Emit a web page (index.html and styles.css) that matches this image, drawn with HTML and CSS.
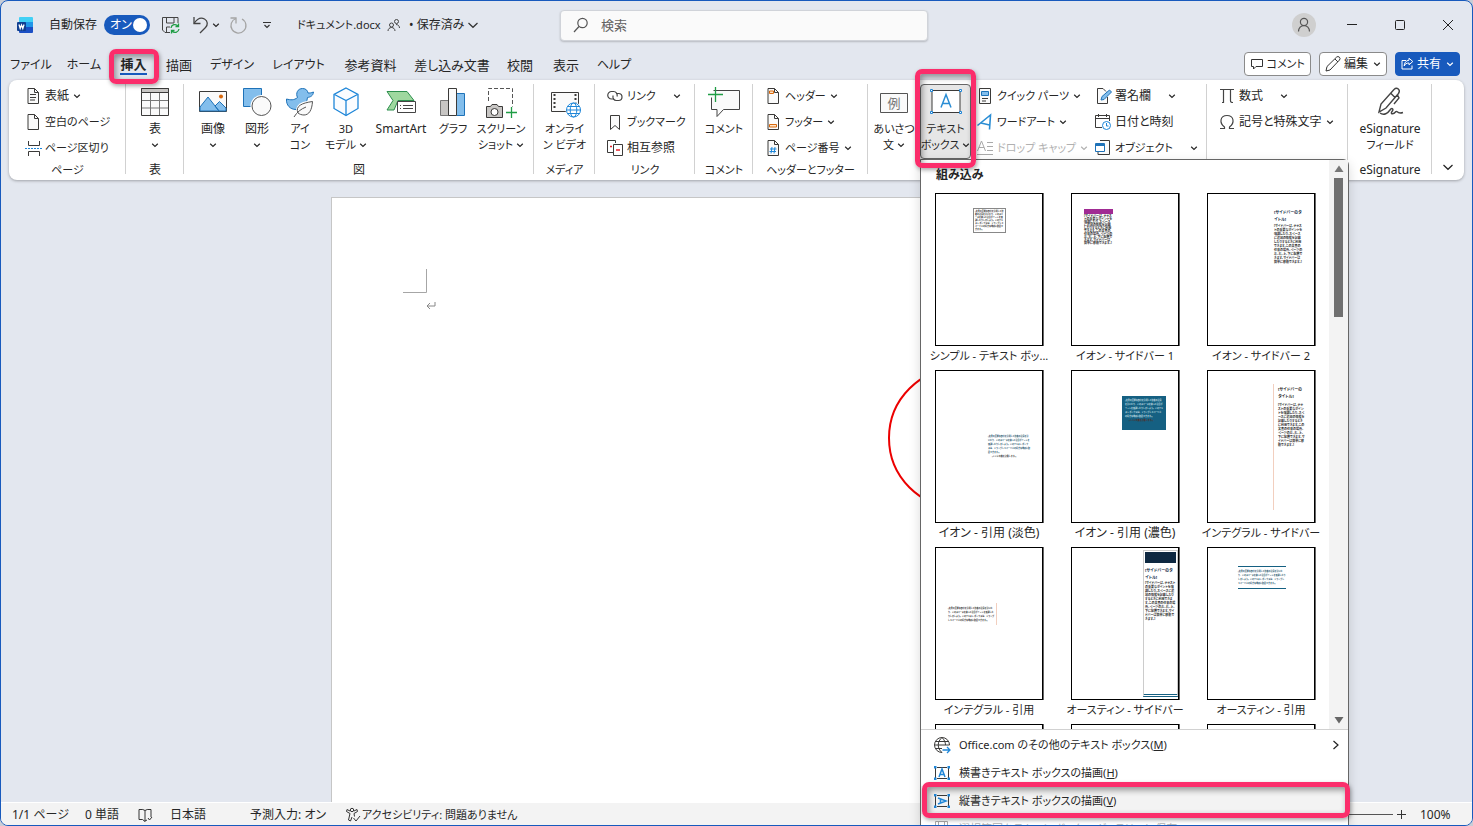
FILE: index.html
```html
<!DOCTYPE html>
<html lang="ja">
<head>
<meta charset="utf-8">
<meta name="viewport" content="width=device-width, initial-scale=1">
<title>ドキュメント.docx - Word</title>
<link rel="stylesheet" href="styles.css">
</head>
<body>
<svg class="sprite" aria-hidden="true">
  <symbol id="chev" viewBox="0 0 8 8"><path d="M1.2 2.8 4 5.4 6.8 2.8" fill="none" stroke="currentColor" stroke-width="1.2"/></symbol>
  <symbol id="page" viewBox="0 0 18 18"><path d="M4 1.5h6.5l4 4v11H4z" fill="#fafafa" stroke="#3b3a39"/><path d="M10.5 1.5v4h4" fill="none" stroke="#3b3a39"/></symbol>
</svg>
<div class="window">
  <header class="titlebar">
    <div class="title-left">
      <svg class="word-logo" viewBox="0 0 16 16"><path d="M3 0h12a1 1 0 0 1 1 1v4H2V1a1 1 0 0 1 1-1z" fill="#41d0f5"/><path d="M2 5h14v5H2z" fill="#2196e8"/><path d="M2 10h14v5a1 1 0 0 1-1 1H3a1 1 0 0 1-1-1z" fill="#1b4fc4"/><rect y="5" width="9" height="9" rx="1" fill="#103f91"/><path d="M2 7.500 3.200 11.500 4.500 8 5.800 11.500 7 7.500" fill="none" stroke="#fff" stroke-width="1.300"/></svg>
      <label class="autosave" for="autosave">自動保存</label>
      <span class="switch"><input id="autosave" type="checkbox" role="switch" checked><span class="switch-text">オン</span><span class="knob"></span></span>
      <button class="tool save" aria-label="上書き保存"><svg width="18" height="18" viewBox="0 0 18 18" fill="none" stroke="#444"><path d="M8 16.500H3L.5 14V1.500h15.500V7"/><path d="M4.500 1.500V7H12V1.500M4.500 16v-5H8"/><path d="M9 12a4 4 0 0 1 7-2M16.500 7.500V10.500H13.500M17 13a4 4 0 0 1-7 2M9.500 17.500v-3h3" stroke="#1f9d45" stroke-width="1.300"/></svg></button>
      <button class="tool undo" aria-label="元に戻す"><svg width="18" height="18" viewBox="0 0 18 18" fill="none" stroke="#444" stroke-width="1.300"><path d="M2 1v6.500h6.500"/><path d="M2 7.500C5 3 9 1 12.500 3s3.500 6 1 8.500L8 17"/></svg></button>
      <svg class="chev undo-chev"><use href="#chev"/></svg>
      <button class="tool redo" aria-label="やり直し"><svg width="18" height="18" viewBox="0 0 18 18" fill="none" stroke="#a5a5a5" stroke-width="1.300"><path d="M1.500 2h5.500v5.500"/><path d="M7 2.500a7.500 7.500 0 1 0 6 .5"/></svg></button>
      <button class="tool custom" aria-label="クイック アクセス ツール バー"><svg width="8" height="8" viewBox="0 0 8 8" fill="none" stroke="#333" stroke-width="1.200"><path d="M0 1.500h8M1.500 4 4 6.500 6.500 4"/></svg></button>
      <span class="doc-name kana">ドキュメント.docx</span>
      <svg class="people" width="14" height="14" viewBox="0 0 14 14" fill="none" stroke="#444"><circle cx="9.500" cy="3.500" r="2"/><path d="M9 6.500c2 0 3.500 1.500 3.500 3.500"/><circle cx="4.500" cy="7" r="2"/><path d="M1 13c0-2 1.500-3.500 3.500-3.500S8 11 8 13"/></svg>
      <button class="saved">• 保存済み<svg width="10" height="8" viewBox="0 0 10 8" fill="none" stroke="#333" stroke-width="1.200"><path d="M.5 2 5 6.300 9.500 2"/></svg></button>
    </div>
    <label class="search"><svg width="16" height="16" viewBox="0 0 16 16" fill="none" stroke="#555" stroke-width="1.200"><circle cx="9.500" cy="6" r="4.700"/><path d="M6 9.500 1 15"/></svg><input type="search" placeholder="検索" aria-label="検索"></label>
    <div class="window-controls">
      <button aria-label="アカウント"><svg width="24" height="24" viewBox="0 0 24 24" fill="none" stroke="#555" stroke-width="1.200"><circle cx="12" cy="12" r="12" fill="#cfcfcf" stroke="none"/><circle cx="12" cy="9" r="3.600"/><path d="M6.500 18.500c0-3.500 2.500-6 5.500-6s5.500 2.500 5.500 6"/></svg></button>
      <button aria-label="最小化"><svg width="12" height="12" viewBox="0 0 12 12" stroke="#222"><path d="M1 5.500h10"/></svg></button>
      <button aria-label="最大化"><svg width="12" height="12" viewBox="0 0 12 12" fill="none" stroke="#222"><rect x="1.500" y="1.500" width="9" height="9" rx="1"/></svg></button>
      <button aria-label="閉じる"><svg width="12" height="12" viewBox="0 0 12 12" stroke="#222"><path d="m1 1 10 10M11 1 1 11"/></svg></button>
    </div>
  </header>

  <div class="tab-row">
    <nav class="tabs">
      <a href="#file" class="tab-kana">ファイル</a><a href="#home" class="tab-kana">ホーム</a><a href="#insert" class="current" aria-current="page"><span>挿入</span><i class="callout callout-tab"></i></a><a href="#draw">描画</a><a href="#design" class="tab-kana">デザイン</a><a href="#layout" class="tab-kana">レイアウト</a><a href="#refs">参考資料</a><a href="#mail">差し込み文書</a><a href="#review">校閲</a><a href="#view">表示</a><a href="#help" class="tab-kana">ヘルプ</a>
    </nav>
    <div class="tab-actions">
      <button class="pill kana"><svg width="14" height="14" viewBox="0 0 14 14" fill="none" stroke="#333"><path d="M1.500 2.500h11v7H6L3.500 12V9.500h-2z"/></svg>コメント</button>
      <button class="pill"><svg width="16" height="16" viewBox="0 0 16 16" fill="none" stroke="#333"><path d="m1 15 1-4.500L11.500 1.200a1.900 1.900 0 0 1 2.900 2.900L5 14zM10 3l3 3"/></svg>編集<svg class="chev"><use href="#chev"/></svg></button>
      <button class="pill share"><svg width="13" height="13" viewBox="0 0 13 13" fill="none" stroke="#fff"><path d="M5 3.500H1v8.500h10V8.500M8 1.200l3.800 3.300L8 7.800V6C5.500 6 4 7 3.200 9c0-3 1.800-5.500 4.800-5.800z"/></svg>共有<svg class="chev"><use href="#chev"/></svg></button>
    </div>
  </div>

  <section class="ribbon" aria-label="挿入">
    <div class="group g-pages">
      <div class="group-body">
        <div class="stack">
          <button class="small"><svg><use href="#page"/><path d="M6 7.500h6M6 10.500h6M6 13h5" stroke="#3b3a39"/></svg>表紙<svg class="chev"><use href="#chev"/></svg></button>
          <button class="small kana"><svg><use href="#page"/></svg>空白のページ</button>
          <button class="small kana"><svg fill="none" stroke="#3b3a39"><path d="M4.500 2v4.500h11V2M4.500 17v-4.500h11V17"/><path d="M1 9.500h17" stroke="#1e86d8" stroke-dasharray="2 1"/></svg>ページ区切り</button>
        </div>
      </div>
      <div class="group-label kana">ページ</div>
    </div>
    <div class="group g-table">
      <div class="group-body">
        <button class="big"><svg viewBox="0 0 32 32" fill="none" stroke="#3b3a39"><path d="M2.500 2.500h27v27h-27z" fill="#fafafa"/><path d="M2.500 2.500h27v4h-27z" fill="#c8c6c4"/><path d="M11.500 7v22M20.500 7v22M3 14.500h26M3 22h26" stroke="#777"/></svg><span>表</span><svg class="chev"><use href="#chev"/></svg></button>
      </div>
      <div class="group-label">表</div>
    </div>
    <div class="group g-figures">
      <div class="group-body">
        <button class="big"><svg viewBox="0 0 32 32"><path d="M2.500 5.500h27v20h-27z" fill="#fafafa" stroke="#3b3a39"/><path d="M3 21 11 11 22 25H3zM18 20l4.500-4.500L29 22v3h-7z" fill="#83beec" stroke="#1e72b8"/><circle cx="24" cy="10.500" r="2" fill="#d8680c"/></svg><span>画像</span><svg class="chev"><use href="#chev"/></svg></button>
        <button class="big"><svg viewBox="0 0 32 32"><path d="M2.500 2.500h18v18h-18z" fill="#83beec" stroke="#1e72b8"/><circle cx="20.500" cy="20" r="11" fill="#fff"/><circle cx="20.500" cy="20" r="9.500" fill="#fafafa" stroke="#555"/></svg><span>図形</span><svg class="chev"><use href="#chev"/></svg></button>
        <button class="big narrow kana"><svg viewBox="0 0 32 32"><path d="M2.500 13c4 1 7.500 1.500 11-1.500-2-4 0-9 5-9 3.500 0 5 2 5.500 4.500 1.500 0 3 0 5.500-1-.5 4-3 5-6 5.500-1 8-6 12-11.500 12-6 0-10-4.500-9.500-10.500z" fill="#83beec" stroke="#1e72b8"/><path d="M12 25c0-7 6-10 17.500-11 0 8-2 16-8 16-3 0-6-1-9.500-5z" fill="#fff"/><path d="M14 27c-3-7 4-10 14.500-11.500C28 24 25 29 20 29c-2.500 0-4.500-.8-6-2z" fill="#fafafa" stroke="#555"/><path d="M10 31c3-5 7-8 12-10" fill="none" stroke="#555"/></svg><span>アイ</span><span>コン</span></button>
        <button class="big model kana"><svg viewBox="0 0 32 32" fill="#fafcff" stroke="#1e86d8" stroke-width="1.300"><path d="m16 2 12 6.500v14L16 29.500l-12-7v-14z"/><path d="m4.500 8.500 11.500 6 11.500-6M16 15v14" fill="none"/></svg><span>3D</span><span>モデル<svg class="chev"><use href="#chev"/></svg></span></button>
        <button class="big wide"><svg viewBox="0 0 32 32"><path d="M2 5.500h20l7 9H13L9 24H2l6-9.500z" fill="#9fd89f" stroke="#2d8f4e"/><path d="M12.500 15.500h18v11h-18z" fill="#fff" stroke="#444"/><path d="M15 19.500h1M18 19.500h10M15 22.500h1M18 22.500h10" stroke="#444"/></svg><span>SmartArt</span></button>
        <button class="big kana"><svg viewBox="0 0 32 32"><path d="M3.500 14.500h8v15h-8z" fill="#c8c6c4" stroke="#777"/><path d="M19.500 7.500h8v22h-8z" fill="#83beec" stroke="#1e72b8"/><path d="M11.500 2.500h8v27h-8z" fill="#fafafa" stroke="#3b3a39"/></svg><span>グラフ</span></button>
        <button class="big shot kana"><svg viewBox="0 0 32 32"><path d="M3.500 15V2.500h24v18" fill="none" stroke="#555" stroke-dasharray="4 2"/><path d="M1.500 20.500h4l1.500-2h5l1.500 2h4v11h-16z" fill="#c8c6c4" stroke="#3b3a39"/><circle cx="9.500" cy="26" r="3.500" fill="#fff" stroke="#3b3a39"/><path d="M26.500 21v11M21 26.500h11" stroke="#1f9d45" stroke-width="1.300"/></svg><span>スクリーン</span><span>ショット<svg class="chev"><use href="#chev"/></svg></span></button>
      </div>
      <div class="group-label">図</div>
    </div>
    <div class="group g-media">
      <div class="group-body">
        <button class="big kana"><svg viewBox="0 0 32 32"><path d="M2.500 6.500h27v19h-27z" fill="#fafafa" stroke="#3b3a39"/><path d="M5.500 8v16M26.500 8v16" stroke="#3b3a39" stroke-width="2" stroke-dasharray="2 2"/><circle cx="24.500" cy="24" r="8" fill="#fff"/><g fill="none" stroke="#1e86d8"><circle cx="24.500" cy="24" r="7"/><ellipse cx="24.500" cy="24" rx="3.300" ry="7"/><path d="M17.500 24h14M18.500 20.500h12M18.500 27.500h12"/></g></svg><span>オンライ</span><span>ン ビデオ</span></button>
      </div>
      <div class="group-label kana">メディア</div>
    </div>
    <div class="group g-links">
      <div class="group-body">
        <div class="stack">
          <button class="small kana"><svg fill="none" stroke="#444" stroke-width="1.200"><path d="M8 12H5.500a3.700 3.700 0 1 1 0-7.500h2a3.700 3.700 0 0 1 3.500 5"/><path d="M10 6.500h2.500a3.500 3.500 0 1 1 0 7h-2a3.500 3.500 0 0 1-3.300-5"/></svg>リンク<svg class="chev far"><use href="#chev"/></svg></button>
          <button class="small kana"><svg fill="#fafafa" stroke="#3b3a39"><path d="M4.500 2.500h9v14L9 12.500l-4.500 4z"/></svg>ブックマーク</button>
          <button class="small"><svg fill="#fff" stroke="#3b3a39"><path d="M7 13.500H1.500v-12h8V4"/><path d="M7.500 5.500h9v11h-9z"/><path d="M4 7.500h2M10 11h4" stroke="#e8202a" stroke-width="1.300"/></svg>相互参照</button>
        </div>
      </div>
      <div class="group-label kana">リンク</div>
    </div>
    <div class="group g-comment">
      <div class="group-body">
        <button class="big kana"><svg viewBox="0 0 32 32"><path d="M5.500 4.500h26v19h-16l-6.500 7v-7H3.500v-12" fill="#fafafa" stroke="#444"/><path d="M7.500 1v15M0 8.500h15" stroke="#1f9d45" stroke-width="1.300"/></svg><span>コメント</span></button>
      </div>
      <div class="group-label kana">コメント</div>
    </div>
    <div class="group g-header">
      <div class="group-body">
        <div class="stack">
          <button class="small kana"><svg><use href="#page"/><path d="M5.500 4h4v2.500h-4z" fill="#fde3c8" stroke="#d8680c"/></svg>ヘッダー<svg class="chev"><use href="#chev"/></svg></button>
          <button class="small kana"><svg><use href="#page"/><path d="M5.500 11.500h7V14h-7z" fill="#fde3c8" stroke="#d8680c"/></svg>フッター<svg class="chev"><use href="#chev"/></svg></button>
          <button class="small kana"><svg><use href="#page"/><path d="M8 8 7 14.500M11 8l-1 6.500M6 10h6.500M5.500 12.500H12" stroke="#1e86d8"/></svg>ページ番号<svg class="chev"><use href="#chev"/></svg></button>
        </div>
      </div>
      <div class="group-label kana">ヘッダーとフッター</div>
    </div>
    <div class="group g-text">
      <div class="group-body">
        <button class="big greet kana"><svg viewBox="0 0 32 32"><path d="M2.500 7.500h27v19h-27z" fill="#fafafa" stroke="#555"/><text x="16" y="22" text-anchor="middle" class="icon-kanji">例</text></svg><span>あいさつ</span><span>文<svg class="chev"><use href="#chev"/></svg></span></button>
        <div class="textbox">
          <button class="big open kana" aria-expanded="true"><svg viewBox="0 0 32 32"><path d="M2 4.500h28v22H2z" fill="#fff" stroke="#3b3a39"/><path d="m11 21.500 5-13 5 13M12.500 17.500h7" fill="none" stroke="#2a8dd4" stroke-width="1.500"/><path d="M.5 3.500h2v2h-2zM29.500 3.500h2v2h-2zM.5 25.500h2v2h-2zM29.500 25.500h2v2h-2z" fill="#fff" stroke="#1e86d8"/></svg><span>テキスト</span><span>ボックス<svg class="chev"><use href="#chev"/></svg></span></button>
          <i class="callout callout-button"></i>
          <div class="menu" role="menu">
            <div class="gallery">
              <div class="gallery-main">
                <h2>組み込み</h2>
                <div class="grid">
                  <button class="card"><span class="thumb"><span class="tiny fine boxed">[文書の重要な部分を引用して読者の注意を引いたり、このスペースを使って注目ポイントを強調したりしましょう。このテキスト ボックスは、ドラッグしてページ上の好きな場所に配置できます。]</span></span><span class="name kana">シンプル - テキスト ボッ...</span></button>
                  <button class="card"><span class="thumb"><span class="purple"></span><span class="tiny side-left">[サイドバーは、テキストの重要なポイントを強調したり、スペースに追加の情報を記載したりするときに利用できます。この文書の任意の場所、ページの左、右、上、下に配置できます。サイドバーは簡単に移動できます。]</span></span><span class="name kana">イオン - サイドバー 1</span></button>
                  <button class="card"><span class="thumb"><span class="tiny-title navy side-title">[サイドバーのタイトル]</span><span class="tiny loose side-right">[サイドバーは、テキストの重要なポイントを強調したり、スペースに追加の情報を記載したりするときに利用できます。この文書の任意の場所、ページの左、右、上、下に配置できます。サイドバーは簡単に移動できます。]</span></span><span class="name kana">イオン - サイドバー 2</span></button>
                  <button class="card"><span class="thumb"><span class="tiny fine quote-light">[文書の重要な部分を引用して読者の注意を引いたり、このスペースを使って注目ポイントを強調したりしましょう。このテキスト ボックスは、ドラッグしてページ上の好きな場所に配置できます。]<span class="source">[ここに出典を記載します。]</span></span></span><span class="name">イオン - 引用 (淡色)</span></button>
                  <button class="card"><span class="thumb"><span class="tiny fine quote-dark">[文書の重要な部分を引用して読者の注意を引いたり、このスペースを使って注目ポイントを強調したりしましょう。このテキスト ボックスは、ドラッグしてページ上の好きな場所に配置できます。]<span class="source">[ここに出典を記載します。]</span></span></span><span class="name">イオン - 引用 (濃色)</span></button>
                  <button class="card"><span class="thumb"><span class="integral"><span class="tiny-title">[サイドバーのタイトル]</span><span class="tiny loose">[サイドバーは、テキストの重要なポイントを強調したり、スペースに追加の情報を記載したりするときに利用できます。この文書の任意の場所、ページの左、右、上、下に配置できます。サイドバーは簡単に移動できます。]</span></span></span><span class="name kana">インテグラル - サイドバー</span></button>
                  <button class="card"><span class="thumb"><span class="tiny fine quote-integral">[文書の重要な部分を引用して読者の注意を引いたり、このスペースを使って注目ポイントを強調したりしましょう。このテキスト ボックスは、ドラッグしてページ上の好きな場所に配置できます。]</span></span><span class="name kana">インテグラル - 引用</span></button>
                  <button class="card"><span class="thumb"><span class="austin"><span class="austin-top"></span><span class="tiny-title navy">[サイドバーのタイトル]</span><span class="tiny loose">[サイドバーは、テキストの重要なポイントを強調したり、スペースに追加の情報を記載したりするときに利用できます。この文書の任意の場所、ページの左、右、上、下に配置できます。サイドバーは簡単に移動できます。]</span></span></span><span class="name kana">オースティン - サイドバー</span></button>
                  <button class="card"><span class="thumb"><span class="tiny fine quote-austin">[文書の重要な部分を引用して読者の注意を引いたり、このスペースを使って注目ポイントを強調したりしましょう。このテキスト ボックスは、ドラッグしてページ上の好きな場所に配置できます。]</span></span><span class="name kana">オースティン - 引用</span></button>
                  <button class="card" aria-label="次の項目"><span class="thumb"></span></button>
                  <button class="card" aria-label="次の項目"><span class="thumb"></span></button>
                  <button class="card" aria-label="次の項目"><span class="thumb"></span></button>
                </div>
              </div>
              <div class="scroll"><svg width="10" height="8" viewBox="0 0 10 8"><path d="M5 0.500 9.500 7H.5z" fill="#777"/></svg><span class="scroll-thumb"></span><svg width="10" height="8" viewBox="0 0 10 8"><path d="M5 7.500.5 1h9z" fill="#666"/></svg></div>
            </div>
            <div class="menu-items">
              <button class="item kana" role="menuitem"><svg width="18" height="18" viewBox="0 0 18 18" fill="none" stroke="#3b3a39"><path d="M16.500 9A7.500 7.500 0 1 0 9 16.500"/><path d="M9 16.500c-5-4-5-11 0-15 2.500 2.500 3.500 5 3.500 7.500M2.500 5.500h13M1.500 9h15M2.500 12.500H9"/><path d="M9.500 14h7M14 11l3 3-3 3" stroke="#1e86d8" stroke-width="1.300"/></svg><span>Office.com のその他のテキスト ボックス(<u>M</u>)</span><svg class="more" width="8" height="10" viewBox="0 0 8 10" fill="none" stroke="#222" stroke-width="1.200"><path d="m1.500 1 4.500 4-4.500 4"/></svg></button>
              <button class="item kana" role="menuitem"><svg width="18" height="18" viewBox="0 0 18 18" fill="none"><path d="M2.500 4v10M15.500 4v10M4 3.500h10M4 14.500h10" stroke="#3b3a39"/><path d="m6 13 3-8 3 8M7 10.500h4" stroke="#1e86d8" stroke-width="1.500"/><path d="M1 2h2.500v2.500H1zM14.500 2H17v2.500h-2.500zM1 13.500h2.500V16H1zM14.500 13.500H17V16h-2.500z" fill="#1e86d8"/></svg><span>横書きテキスト ボックスの描画(<u>H</u>)</span></button>
              <button class="item kana active" role="menuitem"><svg width="18" height="18" viewBox="0 0 18 18" fill="none"><path d="M2.500 4v10M15.500 4v10M4 3.500h10M4 14.500h10" stroke="#3b3a39"/><path d="m5 6 8 3-8 3M7.500 7v4" stroke="#1e86d8" stroke-width="1.500"/><path d="M1 2h2.500v2.500H1zM14.500 2H17v2.500h-2.500zM1 13.500h2.500V16H1zM14.500 13.500H17V16h-2.500z" fill="#1e86d8"/></svg><span>縦書きテキスト ボックスの描画(<u>V</u>)</span><i class="callout callout-item"></i></button>
              <button class="item kana" role="menuitem" disabled><svg width="18" height="18" viewBox="0 0 18 18" fill="none" stroke="#aaa"><path d="M2.500 1.500h12v15h-12zM5.500 1.500v7h6v-7"/></svg><span>選択範囲をテキスト ボックス ギャラリーに保存(<u>S</u>)</span></button>
            </div>
          </div>
        </div>
        <div class="stack quick">
          <button class="small kana"><svg><path d="M3.500 1.500h11v15h-11z" fill="#fafafa" stroke="#3b3a39"/><path d="M5.500 4.500h7v4h-7z" fill="#83beec" stroke="#1e72b8"/><path d="M6 11.500h6M6 14h4" stroke="#3b3a39"/></svg>クイック パーツ<svg class="chev"><use href="#chev"/></svg></button>
          <button class="small kana"><svg fill="none" stroke="#2a8dd4" stroke-width="1.600"><path d="M1.500 12.500 14.500 2l-1 14.500M5 10l8.500 2"/></svg>ワードアート<svg class="chev"><use href="#chev"/></svg></button>
          <button class="small kana" disabled><svg fill="none" stroke="#aaa"><path d="m1.500 12 4-10 4 10M3 8.500h5M11 3.500h6M11 7.500h6M11 11.500h6M1 15.500h16"/></svg>ドロップ キャップ<svg class="chev"><use href="#chev"/></svg></button>
        </div>
        <div class="stack">
          <button class="small"><svg fill="none"><path d="M13.500 10v6.500h-10v-15H9l3 3" fill="#fafafa" stroke="#3b3a39"/><path d="m7 13 1-3.500L15.500 3l2 2L10 12.500z" fill="#83beec" stroke="#1e72b8"/></svg>署名欄<svg class="chev far"><use href="#chev"/></svg></button>
          <button class="small"><svg fill="none" stroke="#3b3a39"><path d="M8 14.500H1.500v-12h14V8M1.500 5.500h14M4.500 1v3M12.500 1v3"/><circle cx="12.500" cy="12.500" r="4" stroke="#1e86d8" fill="#fff"/><path d="M12.500 10v3h2" stroke="#1e86d8"/></svg>日付と時刻</button>
          <button class="small kana"><svg fill="none"><path d="M6 1.500h9.500v14H4V13" fill="#fafafa" stroke="#3b3a39"/><path d="M1.500 4.500h9v8h-9z" fill="#fff" stroke="#1e72b8"/><path d="M2 6h8" stroke="#1e72b8" stroke-width="2"/></svg>オブジェクト<svg class="chev far"><use href="#chev"/></svg></button>
        </div>
      </div>
    </div>
    <div class="group g-symbols">
      <div class="group-body">
        <div class="stack">
          <button class="small"><svg fill="none" stroke="#444" stroke-width="1.200"><path d="M2 2.500h14M5.500 2.500v13H4M12.500 2.500v11.500q0 1.500 2.500 1.500"/></svg>数式<svg class="chev far"><use href="#chev"/></svg></button>
          <button class="small"><svg fill="none" stroke="#444" stroke-width="1.200"><path d="M2 15.500h4.500V14C1 10 2 2.500 9 2.500S17 10 11.500 14v1.500H16"/></svg>記号と特殊文字<svg class="chev"><use href="#chev"/></svg></button>
        </div>
      </div>
    </div>
    <div class="group g-sign">
      <div class="group-body">
        <button class="big wide"><svg viewBox="0 0 32 32" fill="none" stroke="#444" stroke-width="1.400"><path d="m5 26 2-8L20 3.500c3-3 7 .5 4.500 4L12 22zM17 7.500l4 4M23.500 9l1.500 3-5 6M6 27c4 3 8 0 10-3s4-1 2 1.500 1 3.500 4 0c1.500-1 1 3 7 1"/></svg><span>eSignature</span><span class="kana">フィールド</span></button>
      </div>
      <div class="group-label">eSignature</div>
    </div>
    <button class="collapse" aria-label="リボンを折りたたむ"><svg width="10" height="8" viewBox="0 0 10 8" fill="none" stroke="#222" stroke-width="1.200"><path d="M.5 2 5 6.300 9.500 2"/></svg></button>
  </section>

  <main class="workspace">
    <div class="paper">
      <svg class="corner" width="36" height="42" viewBox="0 0 36 42" fill="none" stroke="#a6a6a6"><path d="M0 23.500h23.500V0"/><path d="M32 33v4h-8M27 34l-3 3 3 3" stroke="#888"/></svg>
      <svg class="circle" width="142" height="142" viewBox="0 0 142 142"><circle cx="71" cy="71" r="70" fill="none" stroke="#ec0000" stroke-width="2"/></svg>
    </div>
  </main>

  <footer class="status">
    <span class="s-page">1/1 ページ</span>
    <span class="s-words">0 単語</span>
    <svg class="s-book" width="14" height="14" viewBox="0 0 14 14" fill="none" stroke="#333"><path d="M7 2.500Q5.500 1 1 1.500v10h3.500L7 13.500V2.500Q8.500 1 13 1.500V9M7 13l2-1M10 10l1.500 2L14 9"/></svg>
    <span class="s-lang">日本語</span>
    <span class="s-predict">予測入力: オン</span>
    <svg class="s-access" width="16" height="16" viewBox="0 0 16 16" fill="none" stroke="#333"><circle cx="7" cy="3" r="1.700"/><path d="M5 4 2 2.500 1.500 4.500 5 6.500 3.500 13l2 1 1.500-4M9 4l3-1.500.5 2L9 6.500l.5 3M8.500 11l2.500 3 4-5"/></svg>
    <span class="kana">アクセシビリティ: 問題ありません</span>
    <span class="zoom-line"></span>
    <button class="zoom-in" aria-label="拡大"><svg width="9" height="9" viewBox="0 0 9 9" stroke="#333"><path d="M4.500 0v9M0 4.500h9"/></svg></button>
    <span class="zoom-value">100%</span>
  </footer>
</div>
</body>
</html>
```
FILE: styles.css
```css
* { box-sizing: border-box; }

body {
  margin: 0;
  background: #c9cdd6;
  color: #262626;
  font: 12px/16px "Noto Sans", "Noto Sans CJK JP", sans-serif;
  font-feature-settings: "palt";
}

button, input {
  font: inherit;
  font-feature-settings: inherit;
  color: inherit;
  background: none;
  border: 0;
  padding: 0;
  margin: 0;
}

button, a, span, label { white-space: nowrap; }
svg { flex: none; overflow: visible; }
.sprite { position: absolute; width: 0; height: 0; }
.chev { width: 8px; height: 8px; }
.kana { font-size: 11px; }

.window {
  display: flex;
  flex-direction: column;
  height: 100vh;
  overflow: hidden;
  background: #e3e7ef;
  border: 1px solid #185abd;
  border-radius: 8px;
}

/* title bar */
.titlebar { display: flex; align-items: center; height: 48px; flex: none; }
.title-left { display: flex; align-items: center; width: 38%; padding-left: 16px; }
.word-logo { width: 16px; height: 16px; }
.autosave { width: 55px; margin-left: 16px; }
.switch {
  position: relative;
  display: flex;
  align-items: center;
  justify-content: space-between;
  width: 46px;
  height: 20px;
  padding: 0 3px 0 6px;
  border-radius: 10px;
  background: #185abd;
  color: #fff;
}
.switch input { position: absolute; inset: 0; width: 100%; height: 100%; opacity: 0; }
.knob { width: 14px; height: 14px; border-radius: 50%; background: #fff; }
.tool { display: flex; }
.save { margin-left: 12px; }
.undo { margin-left: 12px; }
.undo-chev { margin-left: 2px; }
.redo { margin-left: 9px; }
.custom { margin-left: 16px; }
.doc-name { width: 88px; margin-left: 26px; }
.people { margin: 0 8px 0 2px; }
.saved { display: flex; align-items: center; gap: 4px; }
.search {
  display: flex;
  align-items: center;
  gap: 12px;
  width: 25%;
  height: 31px;
  padding: 0 12px;
  border: 1px solid #d0d3d9;
  border-radius: 4px;
  background: #fafafa;
  box-shadow: 0 1px 2px rgba(0, 0, 0, .2);
}
.search input { flex: 1; outline: 0; font-size: 13px; }
.search input::placeholder { color: #616161; opacity: 1; }
.window-controls { display: flex; margin-left: auto; }
.window-controls button { display: grid; place-items: center; width: 48px; height: 32px; }

/* tabs */
.tab-row { display: flex; justify-content: space-between; height: 31px; flex: none; }
.tabs {
  display: grid;
  grid-template-columns: 56px 50px 49px 42px 64px 69px 75px 88px 48px 44px 52px;
  padding-left: 2px;
  font-size: 13px;
}
.tabs a {
  position: relative;
  display: flex;
  justify-content: center;
  align-items: center;
  color: inherit;
  text-decoration: none;
}
.tabs .tab-kana { font-size: 12px; }
.tabs span { padding: 2px 0 1px; border-bottom: 2px solid #185abd; }
.current { font-weight: 700; }
.tab-actions { display: flex; align-items: center; gap: 8px; padding: 0 12px 2px 0; }
.pill {
  display: flex;
  align-items: center;
  justify-content: center;
  gap: 3px;
  height: 24px;
  min-width: 64px;
  padding: 0 5px;
  border: 1px solid #8a8a8a;
  border-radius: 4px;
  background: #fff;
}
.pill .chev { margin-left: 2px; }
.share { background: #185abd; border-color: #185abd; color: #fff; }

/* red callout outlines */
.callout {
  position: absolute;
  z-index: 5;
  pointer-events: none;
  border: 5px solid #fb2d6b;
  border-radius: 7px;
  box-shadow: 1px 2px 4px rgba(0, 0, 0, .35), inset 2px 3px 6px rgba(0, 0, 0, .4);
}
.callout-tab { inset: 0 -1px -4px 0; }
.callout-button { inset: -15px -5px -9px -5px; }
.callout-item { inset: -4px -2px -4px 1px; }

/* ribbon */
.ribbon {
  position: relative;
  z-index: 2;
  display: flex;
  flex: none;
  height: 100px;
  margin: 0 8px;
  border-radius: 8px;
  background: #fff;
  box-shadow: 0 1px 3px rgba(0, 0, 0, .3);
}
.group { position: relative; display: flex; flex-direction: column; flex: none; }
.group::after {
  content: "";
  position: absolute;
  right: 0;
  top: 4px;
  bottom: 6px;
  border-right: 1px solid #d1d1d1;
}
.group-body { display: flex; height: 81px; padding-top: 3px; }
.group-label { text-align: center; line-height: 18px; white-space: nowrap; }
.g-pages { width: 117px; }
.g-table { width: 58px; }
.g-figures { width: 350px; }
.g-media { width: 61px; }
.g-links { width: 100px; }
.g-comment { width: 58px; }
.g-header { width: 115px; }
.g-text { width: 339px; }
.g-symbols { width: 141px; }
.g-sign { width: 84px; }
.g-figures .group-body { padding-left: 7px; }
.g-table .group-body, .g-media .group-body, .g-comment .group-body, .g-sign .group-body { justify-content: center; }
.g-pages .stack { padding-left: 15px; }
.g-links .stack, .g-header .stack, .g-symbols .stack { padding-left: 11px; }
.stack { display: flex; flex-direction: column; }
.small { display: flex; align-items: center; gap: 3px; height: 26px; }
.small svg { width: 18px; height: 18px; }
.small svg.chev { width: 8px; height: 8px; margin-left: 1px; }
.small svg.far { margin-left: 14px; }
.small:disabled, .item:disabled { color: #b1b1b1; }
.quick { width: 118px; margin-left: 5px; }
.big {
  display: flex;
  flex-direction: column;
  align-items: center;
  width: 44px;
  padding-top: 3px;
}
.big > svg { width: 32px; height: 32px; margin-bottom: 3px; }
.big > svg.chev { width: 8px; height: 8px; margin-top: 4px; }
.big span { display: flex; align-items: center; gap: 3px; }
.narrow { width: 42px; }
.model { width: 50px; }
.wide { width: 60px; }
.shot, .greet { width: 52px; }
.icon-kanji { font-size: 13px; fill: #777; }
.textbox { position: relative; width: 51px; height: 75px; margin-top: 1px; }
.open {
  width: 51px;
  height: 75px;
  padding-top: 1px;
  border: 1px solid #666;
  border-radius: 4px;
  background: #e6e6e6;
}
.collapse { display: flex; align-items: end; justify-content: center; flex: 1; padding-bottom: 9px; }

/* gallery menu */
.menu {
  position: absolute;
  z-index: 3;
  left: 0;
  top: 100%;
  width: 429px;
  border: 1px solid #666;
  border-radius: 0 6px 0 0;
  background: #fff;
  box-shadow: 0 4px 12px rgba(0, 0, 0, .15);
}
.gallery { display: flex; height: 570px; border-bottom: 1px solid #d1d1d1; }
.gallery-main { flex: 1; overflow: hidden; }
.gallery h2 { margin: 0; padding: 6px 0 0 15px; height: 33px; font-size: 12px; line-height: 18px; }
.grid { display: grid; grid-template-columns: repeat(3, 1fr); }
.card { display: flex; flex-direction: column; align-items: center; height: 177px; }
.thumb {
  display: flex;
  flex-direction: column;
  width: 108px;
  height: 153px;
  border: 1px solid #000;
  box-shadow: 1px 0 0 #666;
  background: #fff;
  flex: none;
  text-align: left;
}
.name { line-height: 20px; }
.tiny { display: block; font-size: 3px; line-height: 3px; font-weight: 700; white-space: normal; }
.fine { font-size: 2px; font-feature-settings: normal; }
.loose { line-height: 4px; }
.tiny-title { display: block; font-size: 4px; line-height: 7px; font-weight: 700; white-space: normal; }
.navy { color: #0e2841; }
.source { display: block; padding-left: 4px; color: #333; }
.boxed { width: 33px; margin: 14px 0 0 37px; padding: 1px; border: 1px solid #888; }
.purple { width: 29px; height: 5px; margin: 15px 0 1px 12px; background: #a02b93; }
.side-left { width: 29px; margin-left: 12px; }
.side-title { width: 29px; margin: 15px 0 1px 66px; }
.side-right { width: 29px; margin-left: 66px; }
.quote-light { width: 42px; margin: 64px 0 0 52px; color: #0f4761; line-height: 4px; }
.quote-dark { width: 44px; height: 34px; margin: 25px 0 0 50px; padding: 3px; background: #156082; color: #cfe0ea; line-height: 4px; }
.quote-dark .source { color: #5a2a1a; }
.integral { width: 36px; height: 126px; margin: 13px 0 0 65px; padding: 2px 4px 0; border-left: 1px solid #f2cfbf; }
.integral .tiny-title { padding-bottom: 3px; }
.quote-integral { width: 49px; margin: 55px 0 0 12px; padding: 4px 1px 2px 0; border-right: 1px solid #f2cfbf; line-height: 4px; }
.austin { width: 35px; height: 147px; margin: 2px 0 0 71px; padding: 1px; border: 1px solid #ccc; border-bottom: 3px double #156082; }
.austin-top { display: block; height: 11px; margin-bottom: 4px; background: #0e2841; }
.quote-austin { width: 48px; margin: 18px 0 0 30px; padding: 3px 0 2px; border: solid #156082; border-width: 1px 0; color: #0f4761; line-height: 4px; }
.scroll {
  display: flex;
  flex-direction: column;
  align-items: center;
  width: 19px;
  padding: 5px 0;
  background: #f3f3f3;
}
.scroll-thumb { width: 9px; height: 139px; margin: 5px 0 auto; background: #707070; }
.item {
  position: relative;
  display: flex;
  align-items: center;
  gap: 8px;
  width: 100%;
  height: 28px;
  padding: 1px 8px 0 12px;
}
.active { background: #f3f3f3; }
.more { margin-left: auto; }

/* document */
.workspace { display: flex; justify-content: center; flex: 1; min-height: 0; padding-top: 17px; }
.paper { position: relative; width: 55.1%; background: #fff; border: solid #c6c6c6; border-width: 1px 1px 0; }
.corner { position: absolute; left: 71px; top: 71px; }
.circle { position: absolute; left: 556px; top: 169px; }

/* status bar */
.status {
  display: flex;
  align-items: center;
  flex: none;
  height: 23px;
  padding: 1px 19px 0 11px;
  border-top: 1px solid #fff;
  background: #f3f3f3;
}
.s-page { width: 73px; }
.s-words { width: 53px; }
.s-book { margin-right: 18px; }
.s-lang { width: 80px; }
.s-predict { width: 95px; }
.s-access { margin-right: 1px; }
.zoom-line { width: 140px; height: 1px; margin-left: auto; background: #555; }
.zoom-in { display: flex; margin: 0 14px 0 4px; }
.zoom-value { min-width: 33px; }
```
